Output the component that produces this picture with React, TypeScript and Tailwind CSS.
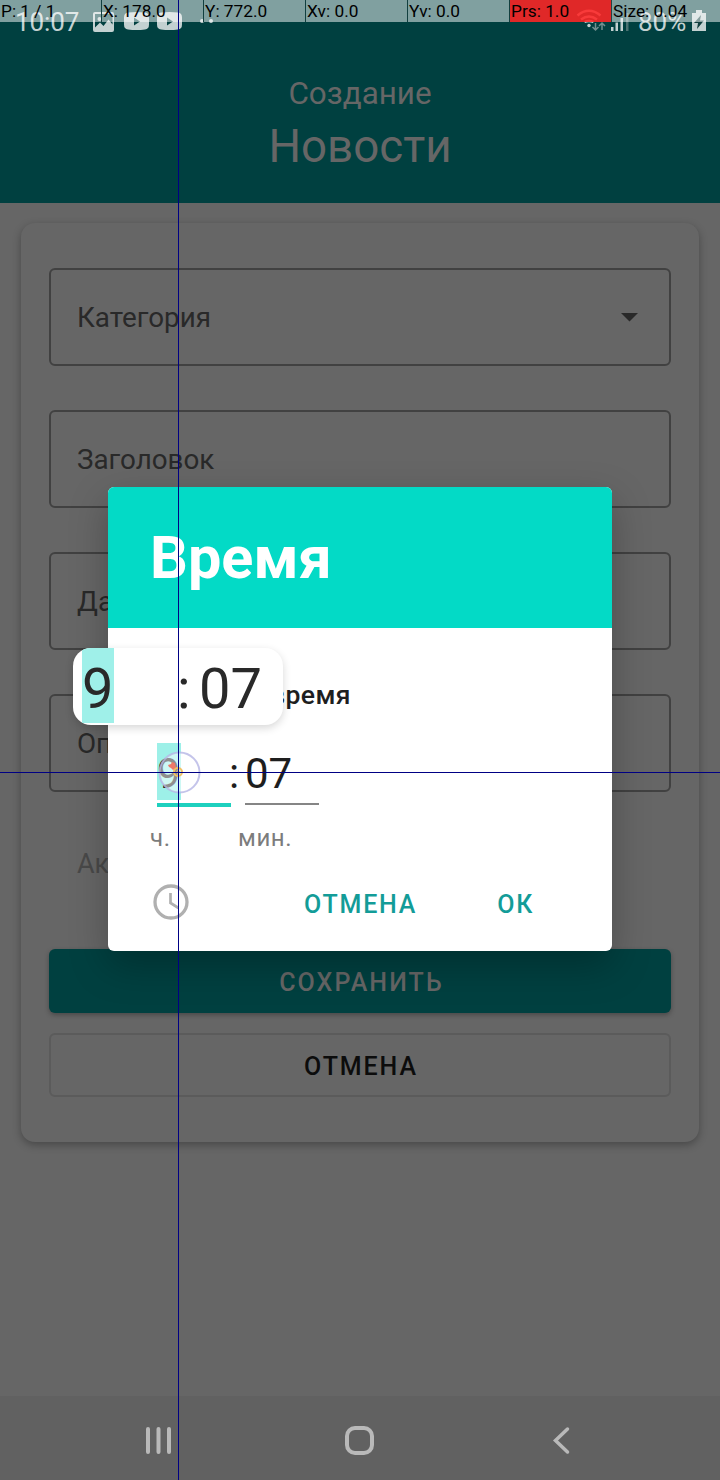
import type { ReactNode } from "react";

const POINTER_CELLS = [
  { text: "P: 1 / 1", alert: false },
  { text: "X: 178.0", alert: false },
  { text: "Y: 772.0", alert: false },
  { text: "Xv: 0.0", alert: false },
  { text: "Yv: 0.0", alert: false },
  { text: "Prs: 1.0", alert: true },
  { text: "Size: 0.04", alert: false },
];

function StatusBar() {
  return (
    <div className="absolute inset-x-0 top-0 flex h-11 items-center pl-[15px] pr-[14px] text-[#c3d1d1]">
      <span className="w-[78px] text-[26px] leading-none tracking-[-0.1px]">10:07</span>
      <svg className="h-11 w-[125px]" viewBox="93 0 125 44" fill="currentColor">
        <path fillRule="evenodd" d="M95 12h17a2 2 0 0 1 2 2v16a2 2 0 0 1-2 2H95a2 2 0 0 1-2-2V14a2 2 0 0 1 2-2Zm0 15.500 5-5 3.500 3.500 5-6.500 4 5V14H95Z" />
        <circle cx="99.500" cy="19" r="2" />
        <path fillRule="evenodd" d="M128 12.500q8.500-1 17 0q4 .5 4 5v7q0 4.500-4 5q-8.500 1-17 0q-4-.5-4-5v-7q0-4.500 4-5Zm6 5v8l6-4Z" />
        <path fillRule="evenodd" d="M161 12.500q8.500-1 17 0q4 .5 4 5v7q0 4.500-4 5q-8.500 1-17 0q-4-.5-4-5v-7q0-4.500 4-5Zm6 5v8l6-4Z" />
        <circle cx="202" cy="21" r="2" />
        <circle cx="211" cy="21" r="2" />
      </svg>
      <span className="grow" />
      <svg className="h-11 w-[54px] shrink-0" viewBox="576 0 54 44" fill="none">
        <g stroke="#c3d1d1" strokeWidth="2.400">
          <path d="M577.500 15.500q11.500-9.500 23 0M581 19.500q8-6 16 0M584.500 22q4.500-2 9 0" />
        </g>
        <circle cx="589" cy="25.500" r="1.700" fill="currentColor" />
        <path d="M595.500 23v7m-3-3 3 3 3-3M602 30v-7m-3 3 3-3 3 3" stroke="#6f8f8f" strokeWidth="1.500" />
        <path d="M611 27h2.500v4H611ZM615.500 22.500h2.500v8.500h-2.500ZM620.500 18h2.500v13h-2.500Z" fill="currentColor" />
        <path d="M626 13h2.500v18H626Z" fill="#4a7272" />
      </svg>
      <span className="ml-2 w-[54px] shrink-0 text-[26px] leading-none">80%</span>
      <svg className="h-11 w-[14px] shrink-0" viewBox="692 0 14 44">
        <path fill="currentColor" d="M696 10h6v3h4v18h-14V13h4Z" />
        <path fill="#123f3f" d="m701 15-7 8h4l-1 6 7-8.500h-4Z" />
      </svg>
    </div>
  );
}

function PointerReadout() {
  return (
    <div className="absolute inset-x-0 top-0 flex h-[22px] text-[17.300px] leading-[22px] text-black">
      {POINTER_CELLS.map((cell) => (
        <div
          key={cell.text}
          className={
            cell.alert
              ? "w-[102px] shrink-0 whitespace-nowrap border-r border-[#244] bg-[#ff2424]/88 pl-px"
              : "w-[102px] shrink-0 grow whitespace-nowrap border-r border-[#123f3f] bg-white/50 pl-px last:w-[108px] last:border-0"
          }
        >
          {cell.text}
        </div>
      ))}
    </div>
  );
}

function Field({ label, dropdown = false }: { label: string; dropdown?: boolean }) {
  return (
    <div className="flex h-[98px] shrink-0 items-center justify-between rounded-md border-2 border-[#414141] pl-[26px] pr-[31px] text-[27.800px] text-[#292929]">
      <span className="pt-px">{label}</span>
      {dropdown && (
        <svg className="h-[9px] w-[17px]" viewBox="0 0 17 9">
          <path d="M0 0h17L8.500 8.500Z" fill="#292929" />
        </svg>
      )}
    </div>
  );
}

function ActionButton({ children }: { children: ReactNode }) {
  return <button className="text-[25px] font-medium leading-8 tracking-[1.800px] text-[#139c98]">{children}</button>;
}

function TimeDialog() {
  return (
    <div className="absolute left-[108px] top-[487px] flex h-[464px] w-[504px] flex-col overflow-hidden rounded-md bg-white shadow-[0_14px_38px_rgba(0,0,0,0.26)]">
      <div className="flex h-[141px] shrink-0 items-center bg-[#03dac6] pl-[42px] pt-[2px] text-[59.400px] font-bold text-white">
        Время
      </div>
      <div className="flex h-[115px] shrink-0 items-center pl-[42px] pt-[18px] text-[26.600px] font-medium text-[#1e1e1e]">
        <span className="flex w-[201px] justify-end whitespace-nowrap tracking-[0.400px]">Укажите время</span>
      </div>
      <div className="flex h-[64px] shrink-0 pl-[49px] text-[42px] leading-[60px] text-[#1e1e1e]">
        <div className="h-[64px] w-[74px] border-b-4 border-[#1dd0be]">
          <span className="block h-[57px] w-6 bg-[#9df0e8] leading-[62px]">9</span>
        </div>
        <span className="-ml-[2px] w-4 leading-[62px]">:</span>
        <div className="h-[62px] w-[74px] border-b-2 border-[#858585] leading-[62px]">07</div>
      </div>
      <div className="flex h-[62px] shrink-0 items-center pl-[42px] text-[24px] tracking-[0.600px] text-[#7c7c7c]">
        <span className="w-[88px]">ч.</span>
        <span>мин.</span>
      </div>
      <div className="flex h-[66px] shrink-0 items-center pl-[45px]">
        <svg className="h-9 w-9" viewBox="0 0 36 36" fill="none" stroke="#b0b0b0" strokeWidth="3.300">
          <circle cx="18" cy="18" r="16" />
          <path d="M17.500 9v10l8 5" strokeWidth="2.700" />
        </svg>
        <div className="ml-[115px] pt-[5px]"><ActionButton>ОТМЕНА</ActionButton></div>
        <div className="ml-[80px] pt-[5px]"><ActionButton>ОК</ActionButton></div>
      </div>
    </div>
  );
}

function Magnifier() {
  return (
    <div className="absolute left-[73px] top-[648px] flex h-[77px] w-[210px] overflow-hidden rounded-[18px] bg-white pl-[9px] text-[56px] leading-[82px] text-[#292929] shadow-[0_3px_8px_rgba(0,0,0,0.16)]">
      <span className="h-[75px] w-8 bg-[#9ff0e9]">9</span>
      <span className="ml-[63px] w-[22px]">:</span>
      <span>07</span>
    </div>
  );
}

function TouchTrace() {
  return (
    <>
      <svg className="absolute left-[158px] top-[750px] h-11 w-11" viewBox="158 750 44 44" fill="none">
        <circle cx="179.500" cy="772.500" r="20" fill="#ffffff" fillOpacity="0.500" stroke="#b5b5e5" strokeOpacity="0.800" strokeWidth="2" />
        <path d="m168 765 3-1 1-2 3 1 1 5-3 2-2-2-2-1Z" fill="#ee7868" />
        <circle cx="178" cy="772" r="4" stroke="#f2c064" strokeWidth="2" />
        <circle cx="178" cy="772" r="1.500" stroke="#f2c064" strokeWidth="1" />
      </svg>
      <div className="absolute inset-y-0 left-[178px] w-px bg-[#000084]" />
      <div className="absolute inset-x-0 top-[772px] h-px bg-[#000084]" />
    </>
  );
}

function NavigationBar() {
  return (
    <nav className="flex h-[84px] shrink-0 bg-[#616161]">
      <svg className="h-[84px] w-full" viewBox="0 0 720 84" fill="none" stroke="#b9b9b9" strokeLinecap="round" strokeWidth="4">
        <path d="M148 33v23M158.500 33v23M169 33v23" />
        <rect x="347" y="32" width="25" height="25" rx="8" />
        <path d="m567.500 33-12 11.500 12 11.500" strokeWidth="3.500" />
      </svg>
    </nav>
  );
}

export default function App() {
  return (
    <div className="relative flex h-[1480px] w-[720px] flex-col overflow-hidden bg-[#666] font-['Roboto','Noto_Sans',sans-serif]">
      <header className="flex h-[203px] shrink-0 flex-col items-center bg-[#004040] pt-[71px] text-[#666]">
        <span className="text-[31.400px] leading-[46px]">Создание</span>
        <span className="text-[45.700px] leading-[60px]">Новости</span>
      </header>
      <main className="grow px-[21px] pt-5">
        <div className="flex h-[919px] flex-col rounded-[14px] bg-[#666] px-7 pt-[45px] shadow-[0_3px_8px_rgba(0,0,0,0.3)]">
          <div className="flex flex-col gap-11">
            <Field label="Категория" dropdown />
            <Field label="Заголовок" />
            <Field label="Дата" />
            <Field label="Описание" />
          </div>
          <div className="flex h-[157px] shrink-0 items-center pl-7 pb-3 text-[27px] text-[#494949]">Активна</div>
          <button className="h-16 shrink-0 rounded-md bg-[#004040] pl-[3px] pt-[4px] text-[25px] font-medium tracking-[2.100px] text-[#666] shadow-[0_2px_5px_rgba(0,0,0,0.3)]">
            СОХРАНИТЬ
          </button>
          <button className="mt-5 h-16 shrink-0 rounded-md border-2 border-[#5b5b5b] pl-[2px] pt-[4px] text-[25px] font-medium tracking-[1.900px] text-[#0c0c0c]">
            ОТМЕНА
          </button>
        </div>
      </main>
      <NavigationBar />
      <StatusBar />
      <PointerReadout />
      <TimeDialog />
      <Magnifier />
      <TouchTrace />
    </div>
  );
}
